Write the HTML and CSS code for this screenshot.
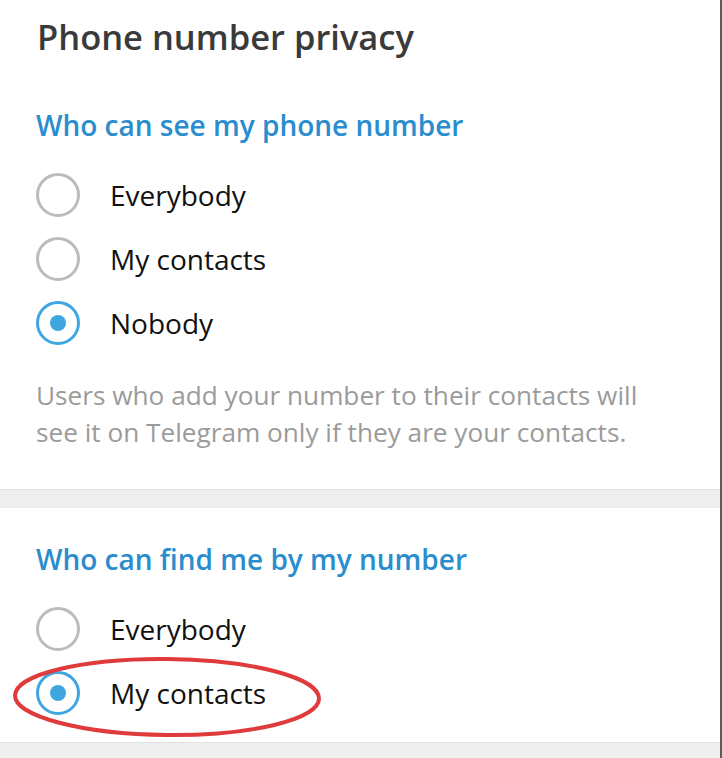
FILE: index.html
```html
<!DOCTYPE html>
<html lang="en">
<head>
	<meta charset="UTF-8" />
	<meta name="viewport" content="width=device-width, initial-scale=1.0" />
	<title>Phone number privacy</title>
	<link rel="stylesheet" href="styles.css">
</head>
<body>
	<div class="panel">
		<div class="block">
			<h1 class="title">Phone number privacy</h1>
			<h2 class="sub">Who can see my phone number</h2>
			<ul class="options">
				<li class="option"><span class="radio"></span>Everybody</li>
				<li class="option"><span class="radio"></span>My contacts</li>
				<li class="option"><span class="radio on"></span>Nobody</li>
			</ul>
			<p class="note">Users who add your number to their contacts will see it on Telegram only if they are your contacts.</p>
		</div>
		<div class="divider"></div>
		<div class="block block-2">
			<h2 class="sub">Who can find me by my number</h2>
			<ul class="options">
				<li class="option"><span class="radio"></span>Everybody</li>
				<li class="option marked">
					<span class="radio on"></span>My contacts
					<svg class="circled" viewBox="0 0 312 84" width="312" height="84">
						<ellipse cx="155" cy="41" rx="152" ry="38" fill="none" stroke="#df3a3c" stroke-width="4" transform="rotate(0.6 155 41)"/>
					</svg>
				</li>
			</ul>
		</div>
		<div class="divider bottom"></div>
	</div>
</body>
</html>
```

FILE: styles.css
```css
body{
	margin: 0;
	background: #fff;
	font-family: "Open Sans", "Noto Sans", sans-serif;
}
.panel{
	width: 720px;
	height: 758px;
	border-right: 2px solid #5a5a5a;
	overflow: hidden;
}
.block{
	padding: 17px 0 38px 36px;
}
.block-2{
	padding-top: 33px;
	padding-bottom: 17px;
}
.title{
	margin: 0 0 50px 1px;
	font-size: 34.5px;
	line-height: 40px;
	font-weight: 600;
	color: #3a3a3a;
}
.sub{
	margin: 0 0 20px;
	font-size: 28px;
	line-height: 36px;
	font-weight: 600;
	color: #2a8dce;
}
.options{
	margin: 0;
	padding: 0;
	list-style: none;
}
.option{
	display: flex;
	align-items: center;
	gap: 30px;
	height: 64px;
	font-size: 28px;
	color: #111;
}
.marked{
	position: relative;
}
.radio{
	box-sizing: border-box;
	width: 44px;
	height: 44px;
	border: 3.5px solid #bcbcbc;
	border-radius: 50%;
	display: flex;
	align-items: center;
	justify-content: center;
}
.radio.on{
	border-color: #40a6e2;
}
.radio.on::after{
	content: "";
	width: 16px;
	height: 16px;
	border-radius: 50%;
	background: #40a6e2;
}
.circled{
	position: absolute;
	left: -24px;
	top: -5px;
}
.note{
	margin: 22px 0 0;
	width: 615px;
	font-size: 26.2px;
	line-height: 37px;
	color: #9b9b9b;
}
.divider{
	height: 18px;
	background: #efefef;
	border-top: 1px solid #e2e2e2;
}
.bottom{
	height: 40px;
}
```
